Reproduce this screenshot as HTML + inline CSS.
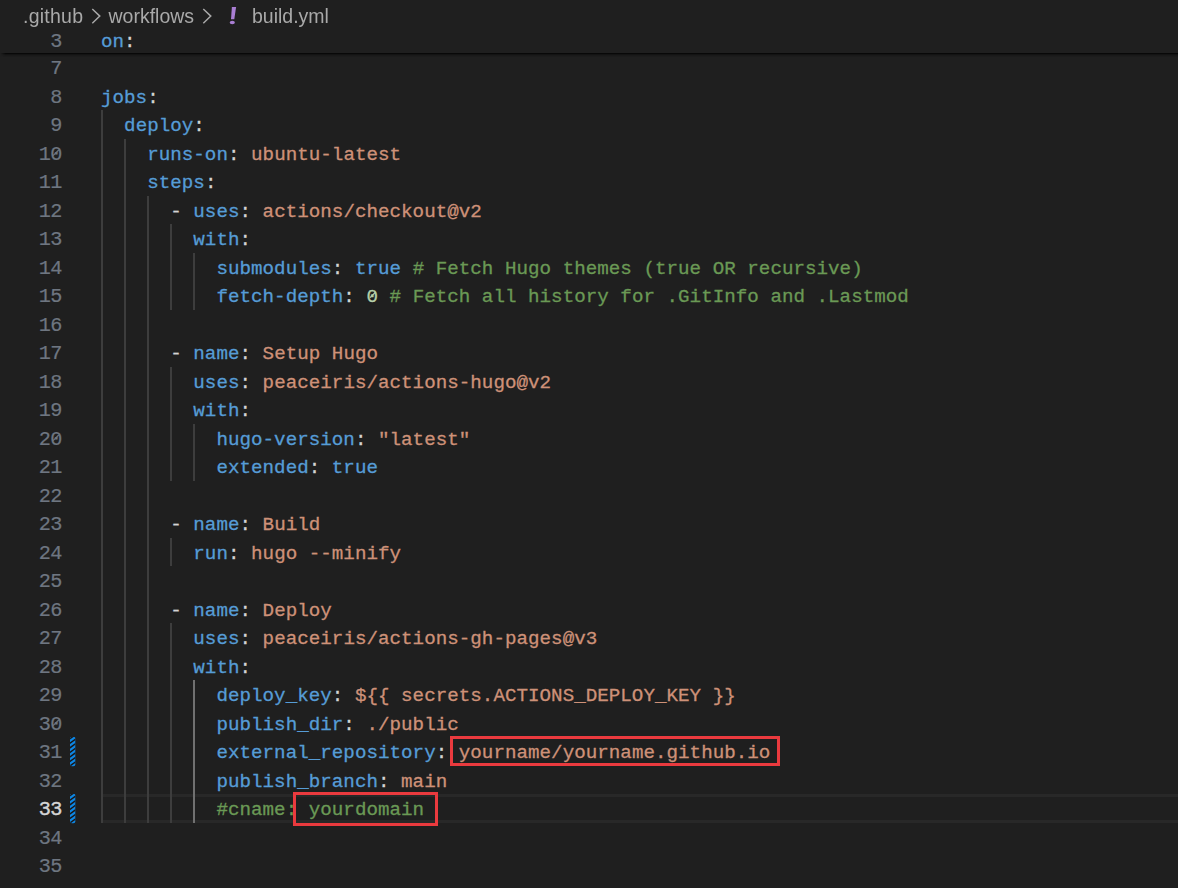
<!DOCTYPE html>
<html><head><meta charset="utf-8"><title>build.yml</title>
<style>
html,body{margin:0;padding:0;background:#1f1f1f;}
body{width:1178px;height:888px;overflow:hidden;position:relative;font-family:"Liberation Mono",monospace;}
.ln,.cl{position:absolute;white-space:pre;font-family:"Liberation Mono",monospace;font-size:19.2px;line-height:28.5px;height:28.5px;letter-spacing:0.026px;}
.ln{left:0;width:61.726px;text-align:right;color:#6e7681;-webkit-text-stroke:0.2px;font-size:20.2px;letter-spacing:-0.574px;}
.ln.act{color:#d4d4d4;-webkit-text-stroke:0.4px;}
.cl{left:101.0px;color:#d4d4d4;-webkit-text-stroke:0.3px;}
.k{color:#569cd6}.s{color:#ce9178}.c{color:#6a9955}.n{color:#b5cea8}.p{color:#d4d4d4}
.g{position:absolute;width:2px;background:#3d3d3d;}
.g.a{background:#707070;}
.bc{position:absolute;opacity:0.999;top:3px;height:26px;line-height:26px;font-family:"Liberation Sans",sans-serif;font-size:19.5px;color:#a9a9a9;white-space:pre;}
.red{position:absolute;border:3px solid #ea3a3e;box-sizing:border-box;}
</style></head><body>

<div style="position:absolute;left:101px;right:0;top:794px;height:29px;box-sizing:border-box;border-top:3px solid #282828;border-bottom:3px solid #282828;"></div>
<div class="g" style="left:101px;top:110px;height:713px"></div>
<div class="g" style="left:124px;top:139px;height:684px"></div>
<div class="g" style="left:147px;top:196px;height:627px"></div>
<div class="g" style="left:170px;top:224px;height:86px"></div>
<div class="g" style="left:170px;top:367px;height:114px"></div>
<div class="g" style="left:170px;top:538px;height:28px"></div>
<div class="g" style="left:170px;top:623px;height:200px"></div>
<div class="g" style="left:193px;top:253px;height:57px"></div>
<div class="g" style="left:193px;top:424px;height:57px"></div>
<div class="g a" style="left:193px;top:680px;height:143px"></div>
<svg style="position:absolute;left:69.8px;top:737px" width="6" height="30" viewBox="0 0 6 30"><defs><clipPath id="cp31"><rect x="0" y="-0.2" width="5.3" height="29.4" rx="1.8"/></clipPath></defs><g clip-path="url(#cp31)"><rect x="0" y="-1" width="6" height="31" fill="#0d86e3"/><g stroke="#1b1513" stroke-width="1.45" fill="none"><path d="M-1 2.40 L7 -3.40"/><path d="M-1 6.94 L7 1.14"/><path d="M-1 11.48 L7 5.68"/><path d="M-1 16.02 L7 10.22"/><path d="M-1 20.56 L7 14.76"/><path d="M-1 25.10 L7 19.30"/><path d="M-1 29.64 L7 23.84"/><path d="M-1 34.18 L7 28.38"/></g></g></svg>
<svg style="position:absolute;left:69.8px;top:794px" width="6" height="30" viewBox="0 0 6 30"><defs><clipPath id="cp33"><rect x="0" y="-0.2" width="5.3" height="29.4" rx="1.8"/></clipPath></defs><g clip-path="url(#cp33)"><rect x="0" y="-1" width="6" height="31" fill="#0d86e3"/><g stroke="#1b1513" stroke-width="1.45" fill="none"><path d="M-1 2.40 L7 -3.40"/><path d="M-1 6.94 L7 1.14"/><path d="M-1 11.48 L7 5.68"/><path d="M-1 16.02 L7 10.22"/><path d="M-1 20.56 L7 14.76"/><path d="M-1 25.10 L7 19.30"/><path d="M-1 29.64 L7 23.84"/><path d="M-1 34.18 L7 28.38"/></g></g></svg>
<div class="ln" style="top:55.25px">7</div>
<div class="ln" style="top:83.75px">8</div>
<div class="cl" style="top:83.75px"><span class="k">jobs</span><span class="p">:</span></div>
<div class="ln" style="top:112.25px">9</div>
<div class="cl" style="top:112.25px"><span class="p">  </span><span class="k">deploy</span><span class="p">:</span></div>
<div class="ln" style="top:140.75px">10</div>
<div class="cl" style="top:140.75px"><span class="p">    </span><span class="k">runs-on</span><span class="p">: </span><span class="s">ubuntu-latest</span></div>
<div class="ln" style="top:169.25px">11</div>
<div class="cl" style="top:169.25px"><span class="p">    </span><span class="k">steps</span><span class="p">:</span></div>
<div class="ln" style="top:197.75px">12</div>
<div class="cl" style="top:197.75px"><span class="p">      - </span><span class="k">uses</span><span class="p">: </span><span class="s">actions/checkout@v2</span></div>
<div class="ln" style="top:226.25px">13</div>
<div class="cl" style="top:226.25px"><span class="p">        </span><span class="k">with</span><span class="p">:</span></div>
<div class="ln" style="top:254.75px">14</div>
<div class="cl" style="top:254.75px"><span class="p">          </span><span class="k">submodules</span><span class="p">: </span><span class="k">true</span><span class="p"> </span><span class="c"># Fetch Hugo themes (true OR recursive)</span></div>
<div class="ln" style="top:283.25px">15</div>
<div class="cl" style="top:283.25px"><span class="p">          </span><span class="k">fetch-depth</span><span class="p">: </span><span class="n">0</span><span class="p"> </span><span class="c"># Fetch all history for .GitInfo and .Lastmod</span></div>
<div class="ln" style="top:311.75px">16</div>
<div class="ln" style="top:340.25px">17</div>
<div class="cl" style="top:340.25px"><span class="p">      - </span><span class="k">name</span><span class="p">: </span><span class="s">Setup Hugo</span></div>
<div class="ln" style="top:368.75px">18</div>
<div class="cl" style="top:368.75px"><span class="p">        </span><span class="k">uses</span><span class="p">: </span><span class="s">peaceiris/actions-hugo@v2</span></div>
<div class="ln" style="top:397.25px">19</div>
<div class="cl" style="top:397.25px"><span class="p">        </span><span class="k">with</span><span class="p">:</span></div>
<div class="ln" style="top:425.75px">20</div>
<div class="cl" style="top:425.75px"><span class="p">          </span><span class="k">hugo-version</span><span class="p">: </span><span class="s">"latest"</span></div>
<div class="ln" style="top:454.25px">21</div>
<div class="cl" style="top:454.25px"><span class="p">          </span><span class="k">extended</span><span class="p">: </span><span class="k">true</span></div>
<div class="ln" style="top:482.75px">22</div>
<div class="ln" style="top:511.25px">23</div>
<div class="cl" style="top:511.25px"><span class="p">      - </span><span class="k">name</span><span class="p">: </span><span class="s">Build</span></div>
<div class="ln" style="top:539.75px">24</div>
<div class="cl" style="top:539.75px"><span class="p">        </span><span class="k">run</span><span class="p">: </span><span class="s">hugo --minify</span></div>
<div class="ln" style="top:568.25px">25</div>
<div class="ln" style="top:596.75px">26</div>
<div class="cl" style="top:596.75px"><span class="p">      - </span><span class="k">name</span><span class="p">: </span><span class="s">Deploy</span></div>
<div class="ln" style="top:625.25px">27</div>
<div class="cl" style="top:625.25px"><span class="p">        </span><span class="k">uses</span><span class="p">: </span><span class="s">peaceiris/actions-gh-pages@v3</span></div>
<div class="ln" style="top:653.75px">28</div>
<div class="cl" style="top:653.75px"><span class="p">        </span><span class="k">with</span><span class="p">:</span></div>
<div class="ln" style="top:682.25px">29</div>
<div class="cl" style="top:682.25px"><span class="p">          </span><span class="k">deploy_key</span><span class="p">: </span><span class="s">${{ secrets.ACTIONS_DEPLOY_KEY }}</span></div>
<div class="ln" style="top:710.75px">30</div>
<div class="cl" style="top:710.75px"><span class="p">          </span><span class="k">publish_dir</span><span class="p">: </span><span class="s">./public</span></div>
<div class="ln" style="top:739.25px">31</div>
<div class="cl" style="top:739.25px"><span class="p">          </span><span class="k">external_repository</span><span class="p">: </span><span class="s">yourname/yourname.github.io</span></div>
<div class="ln" style="top:767.75px">32</div>
<div class="cl" style="top:767.75px"><span class="p">          </span><span class="k">publish_branch</span><span class="p">: </span><span class="s">main</span></div>
<div class="ln act" style="top:796.25px">33</div>
<div class="cl" style="top:796.25px"><span class="p">          </span><span class="c">#cname: yourdomain</span></div>
<div class="ln" style="top:824.75px">34</div>
<div class="ln" style="top:853.25px">35</div>
<svg style="position:absolute;left:366.56px;top:287px" width="12" height="16" viewBox="0 0 12 16"><path d="M3.1 10.6 L8.7 5.0" stroke="#b5cea8" stroke-width="1.25" fill="none"/></svg>
<svg style="position:absolute;left:49.75px;top:145px" width="12" height="16" viewBox="0 0 12 16"><path d="M3.1 10.6 L8.7 5.0" stroke="#6e7681" stroke-width="1.15" fill="none"/></svg>
<svg style="position:absolute;left:49.75px;top:430px" width="12" height="16" viewBox="0 0 12 16"><path d="M3.1 10.6 L8.7 5.0" stroke="#6e7681" stroke-width="1.15" fill="none"/></svg>
<svg style="position:absolute;left:49.75px;top:715px" width="12" height="16" viewBox="0 0 12 16"><path d="M3.1 10.6 L8.7 5.0" stroke="#6e7681" stroke-width="1.15" fill="none"/></svg>
<div style="position:absolute;left:0;top:0;width:1178px;height:53px;background:#1f1f1f;"></div>
<div style="position:absolute;left:0;top:53px;width:1178px;height:4px;background:linear-gradient(to bottom,#080808 0,#080808 1px,#131313 1px,#131313 2px,#191919 2px,#191919 3px,#1c1c1c 3px,#1c1c1c 4px);-webkit-mask-image:linear-gradient(to right,transparent 0,#000 6px);mask-image:linear-gradient(to right,transparent 0,#000 6px);"></div>
<div class="ln" style="top:28.35px">3</div>
<div class="cl" style="top:28.35px"><span class="k">on</span><span class="p">:</span></div>
<div class="bc" style="left:23px;letter-spacing:0.25px">.github</div>
<svg style="position:absolute;left:88px;top:6px" width="16" height="20" viewBox="0 0 16 20"><path d="M4.3 3 L11.8 10.1 L4.3 17.2" fill="none" stroke="#a9a9a9" stroke-width="1.45"/></svg>
<div class="bc" style="left:108.5px">workflows</div>
<svg style="position:absolute;left:198.7px;top:6px" width="16" height="20" viewBox="0 0 16 20"><path d="M4.3 3 L11.8 10.1 L4.3 17.2" fill="none" stroke="#a9a9a9" stroke-width="1.45"/></svg>
<svg style="position:absolute;left:226px;top:4px" width="14" height="24" viewBox="0 0 14 24"><path d="M5.9 3 L10.1 3 L8.3 15.3 L5 15.3 Z" fill="#a97ed3"/><ellipse cx="6.3" cy="18.4" rx="2.6" ry="1.75" fill="#a97ed3"/></svg>
<div class="bc" style="left:252px">build.yml</div>
<div class="red" style="left:450px;top:736px;width:330px;height:30px"></div>
<div class="red" style="left:293px;top:792px;width:145px;height:34px"></div>
</body></html>
